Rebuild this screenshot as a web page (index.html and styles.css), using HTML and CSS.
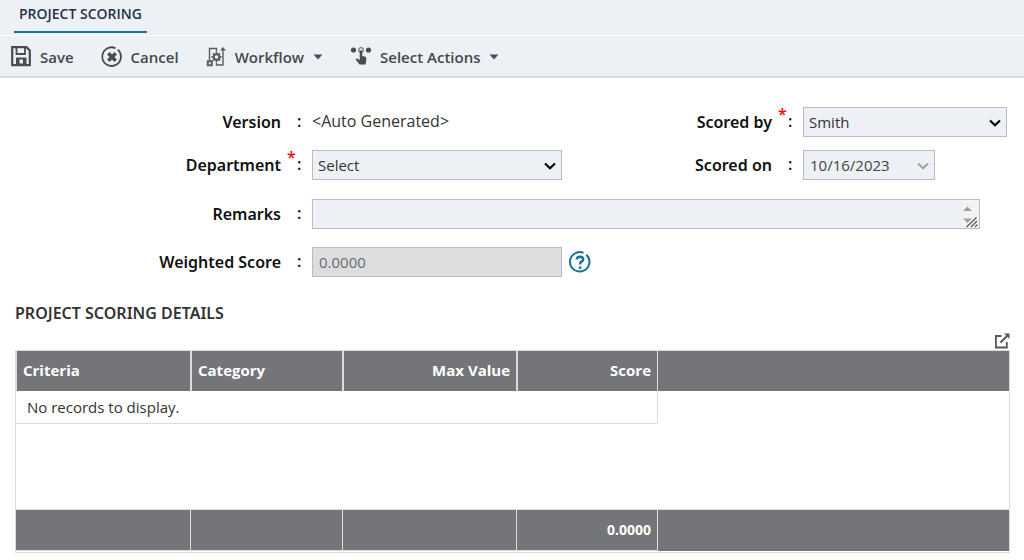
FILE: index.html
```html
<!DOCTYPE html>
<html lang="en">
<head>
<meta charset="utf-8">
<title>Project Scoring</title>
<link rel="stylesheet" href="styles.css">
</head>
<body>
<header class="top">
  <nav class="tabs"><a class="tab" href="#scoring">PROJECT SCORING</a></nav>
  <div class="toolbar">
    <button class="tool tool-save" type="button">
      <svg class="icon" width="22" height="22" viewBox="0 0 22 22" fill="none" stroke="#4a4c52"><path d="M1.200 1.200H15.500L18.800 4.500V19.200H1.200Z" stroke-width="2.200"/><path d="M5.500 2V8H14V2" stroke-width="1.800"/><path d="M5 20V11.500H15.500V20H5Z" fill="#4a4c52" stroke="none"/><path d="M8.500 13.500h3.500v4H8.500z" fill="#edf1f5" stroke="none"/></svg>
      <span>Save</span>
    </button>
    <button class="tool tool-cancel" type="button">
      <svg class="icon" width="22" height="22" viewBox="0 0 22 22" fill="none" stroke="#4a4c52"><path d="M14.500 2.200A9.300 9.300 0 1 0 16.800 3.700" stroke-width="1.800"/><path d="M7.300 7.300L14.700 14.700M14.700 7.300L7.300 14.700" stroke-width="3.600"/></svg>
      <span>Cancel</span>
    </button>
    <button class="tool tool-workflow" type="button">
      <svg class="icon" width="20" height="22" viewBox="0 0 20 22" fill="none" stroke="#5a5c62"><path d="M3.500 14.500V2.500H10.500V5.500M17 4V19H10.500V16.500" stroke-width="1.400"/><path d="M14 4.500L17 1L20 4.500Z" fill="#5a5c62" stroke="none"/><path d="M1.800 15.200h4v4h-4z" stroke-width="2"/><circle cx="10.500" cy="11" r="2.700" stroke-width="1.900"/><path d="M10.500 6v2M10.500 14v2M5.500 11h2M13.500 11h2M7 7.500l1.500 1.500M12.500 13l1.500 1.500M14 7.500L12.500 9M8.500 13L7 14.500" stroke-width="1.800"/></svg>
      <span>Workflow</span>
      <svg class="caret" width="10" height="6" viewBox="0 0 10 6"><path d="M0.500 0.500H9.500L5 5.500Z" fill="#3e535c"/></svg>
    </button>
    <button class="tool tool-actions" type="button">
      <svg class="icon" width="22" height="22" viewBox="0 0 22 22" fill="#4a4c52"><circle cx="3.500" cy="4" r="2.600"/><circle cx="18.500" cy="4" r="2.600"/><circle cx="11" cy="4" r="2.300" fill="none" stroke="#777a80" stroke-width="1.300"/><path d="M9.700 5Q11 3.500 12.300 5V10L15.500 10.800Q16.600 11.200 16.400 12.500L15.700 18.500H9.500L5.600 13.500Q6.300 12 7.700 12.800L9.700 14.200Z"/></svg>
      <span>Select Actions</span>
      <svg class="caret" width="10" height="6" viewBox="0 0 10 6"><path d="M0.500 0.500H9.500L5 5.500Z" fill="#3e535c"/></svg>
    </button>
  </div>
</header>
<main id="scoring">
  <form class="form">
    <span class="label">Version</span><span class="colon">:</span>
    <span class="value">&lt;Auto Generated&gt;</span>
    <label class="label label-right" for="by">Scored by</label><span class="colon"><span class="star">*</span>:</span>
    <div class="field field-by"><select id="by" class="control"><option>Smith</option></select><svg class="chevron" width="12" height="8" viewBox="0 0 12 8"><path d="M1 1.500L6 6.300L11 1.500" fill="none" stroke="#000" stroke-width="2.200"/></svg></div>

    <label class="label" for="dept">Department</label><span class="colon"><span class="star">*</span>:</span>
    <div class="field field-medium"><select id="dept" class="control"><option>Select</option></select><svg class="chevron" width="12" height="8" viewBox="0 0 12 8"><path d="M1 1.500L6 6.300L11 1.500" fill="none" stroke="#000" stroke-width="2.200"/></svg></div>
    <label class="label label-right" for="on">Scored on</label><span class="colon">:</span>
    <div class="field field-date"><select id="on" class="control" disabled><option>10/16/2023</option></select><svg class="chevron" width="12" height="8" viewBox="0 0 12 8"><path d="M1 1.500L6 6.300L11 1.500" fill="none" stroke="#a2a5a8" stroke-width="2.200"/></svg></div>

    <label class="label row-gap" for="remarks">Remarks</label><span class="colon row-gap">:</span>
    <div class="field field-wide row-gap"><textarea id="remarks" class="control remarks" rows="1"></textarea><svg class="grip" width="17" height="28" viewBox="0 0 17 28"><path d="M0 0H17V28H0Z" fill="#f1f2f3"/><path d="M1 11H10L5.500 6.500Z M1 18.500H10L5.500 23Z" fill="#a0a0a0"/><path d="M4.500 27L14.500 17.500M9 27L15 21M13 27L15.500 24.500" stroke="#55585c" stroke-width="1.200"/></svg></div>

    <label class="label row-last" for="weighted">Weighted Score</label><span class="colon row-last">:</span>
    <div class="weighted row-last"><div class="field field-medium"><input id="weighted" class="control readonly" type="text" value="0.0000" readonly></div>
      <button class="help" type="button" aria-label="Help"><svg width="22" height="22" viewBox="0 0 22 22" fill="none" stroke="#1b7196"><path d="M14.500 1.900A9.700 9.700 0 1 0 17.300 3.700" stroke-width="2"/><path d="M7.700 8.500Q7.900 5.700 11 5.700Q14.300 5.800 14.200 8.400Q14.100 9.900 12.400 10.700Q11.100 11.400 11.100 13.500" stroke-width="2.500"/><path d="M9.800 15.500h2.600V18H9.800z" fill="#1b7196" stroke="none"/></svg></button></div>
  </form>
  <section class="details">
    <h2 class="title">PROJECT SCORING DETAILS</h2>
    <div class="actions"><button class="popout" type="button" aria-label="Open in new window"><svg width="16" height="16" viewBox="0 0 16 16" fill="none" stroke="#55575c"><path d="M7.500 3H1.900V14.500H12.800V9" stroke-width="1.800"/><path d="M6.500 9.500L13 3" stroke-width="2"/><path d="M10 0.500H15.500V6Z" fill="#55575c" stroke="none"/></svg></button></div>
    <div class="panel">
      <table class="table">
        <colgroup><col class="c1"><col class="c2"><col class="c3"><col class="c4"><col></colgroup>
        <thead><tr><th>Criteria</th><th>Category</th><th class="num">Max Value</th><th class="num last">Score</th><td></td></tr></thead>
        <tbody><tr><td class="empty" colspan="4">No records to display.</td><td></td></tr><tr class="space"><td colspan="5"></td></tr></tbody>
        <tfoot><tr><td></td><td></td><td></td><td class="num">0.0000</td><td></td></tr></tfoot>
      </table>
    </div>
  </section>
</main>
</body>
</html>
```
FILE: styles.css
```css
* { box-sizing: border-box; }
body { margin: 0; background: #fff; color: #333; font-family: "Open Sans", "Noto Sans", sans-serif; font-size: 15px; line-height: 20px; }
button { padding: 0; border: 0; background: none; color: inherit; font: inherit; cursor: pointer; }
svg { display: block; }
.top { background: #edf1f5; border-bottom: 2px solid #d8dce2; }
.tabs { display: flex; padding: 0 14px; height: 36px; border-bottom: 1px solid #fff; }
.tab { height: 33px; padding: 4px 5px; border-bottom: 2px solid #1b7196; color: #263248; font-size: 14px; font-weight: 600; text-decoration: none; }
.toolbar { display: flex; align-items: center; height: 40px; padding: 1px 11px 0; }
.tool { display: flex; align-items: center; color: #45484e; font-weight: 600; }
.tool-save { gap: 7px; margin-right: 27px; }
.tool-cancel { gap: 8px; margin-right: 27px; }
.tool-workflow { gap: 9px; margin-right: 27px; }
.tool-actions { gap: 8px; }

.form { display: grid; grid-template-columns: 281px 31px 1fr auto 31px 221px; row-gap: 13px; padding-top: 29px; align-items: center; }
.label { padding-bottom: 1px; text-align: right; color: #111; font-family: "Noto Sans", "Open Sans", sans-serif; font-size: 16px; font-weight: 600; }
.colon { position: relative; padding: 0 0 2px 16px; color: #111; font-size: 16px; font-weight: 600; }
.value { padding-bottom: 3px; font-size: 16px; }
.star { position: absolute; left: 6px; top: -7px; color: #f00; }
.row-gap { margin-top: 6px; }
.row-last { margin-top: 5px; }
.field { position: relative; height: 30px; }
.field-medium { width: 250px; }
.field-by { width: 204px; }
.field-date { width: 132px; }
.field-wide { grid-column: 3 / -1; margin-right: 44px; }
.weighted { display: flex; align-items: center; gap: 7px; grid-column: 3 / -1; }
.control { display: block; width: 100%; height: 100%; margin: 0; padding: 0 6px; border: 1px solid #b9bcc8; border-radius: 0; background: #edf1f5; color: #333; font: inherit; appearance: none; }
select.control { padding: 0 5px; }
.control:disabled { padding: 0 6px; color: #444; opacity: 1; }
.remarks { resize: none; overflow: hidden; }
.readonly { background: #dcddde; color: #6a6c70; }
.chevron { position: absolute; right: 6px; top: 12px; pointer-events: none; }
.grip { position: absolute; right: 1px; top: 1px; pointer-events: none; }

.details { padding: 0 14px 0 15px; }
.title { margin: 26px 0 0; color: #333; font-family: "Noto Sans", "Open Sans", sans-serif; font-size: 16px; font-weight: 600; line-height: 20px; }
.actions { display: flex; justify-content: flex-end; padding: 10px 0 1px; }
.panel { padding-bottom: 1px; border: 1px solid #d9dce0; }
.table { width: 100%; table-layout: fixed; border-collapse: separate; border-spacing: 0; }
.c1 { width: 175px; }
.c2 { width: 152px; }
.c3 { width: 174px; }
.c4 { width: 141px; }
.table td, .table th { padding: 0 6px; text-align: left; }
.table th { height: 40px; padding-bottom: 2px; border: solid #d9dce0; border-width: 0 1px; font-size: 15px; font-weight: 700; }
.table thead, .table tfoot { background: #747579; color: #fff; }
.table .num { text-align: right; }
.table .empty { height: 33px; padding: 0 11px; border: solid #d9dce0; border-width: 0 1px 1px 0; }
.space { height: 85px; }
.table tfoot td { height: 42px; border: solid #d9dce0; border-width: 1px 1px 1px 0; font-size: 14px; font-weight: 700; }
.table tfoot td:last-child { border-width: 1px 0 0; }
```
